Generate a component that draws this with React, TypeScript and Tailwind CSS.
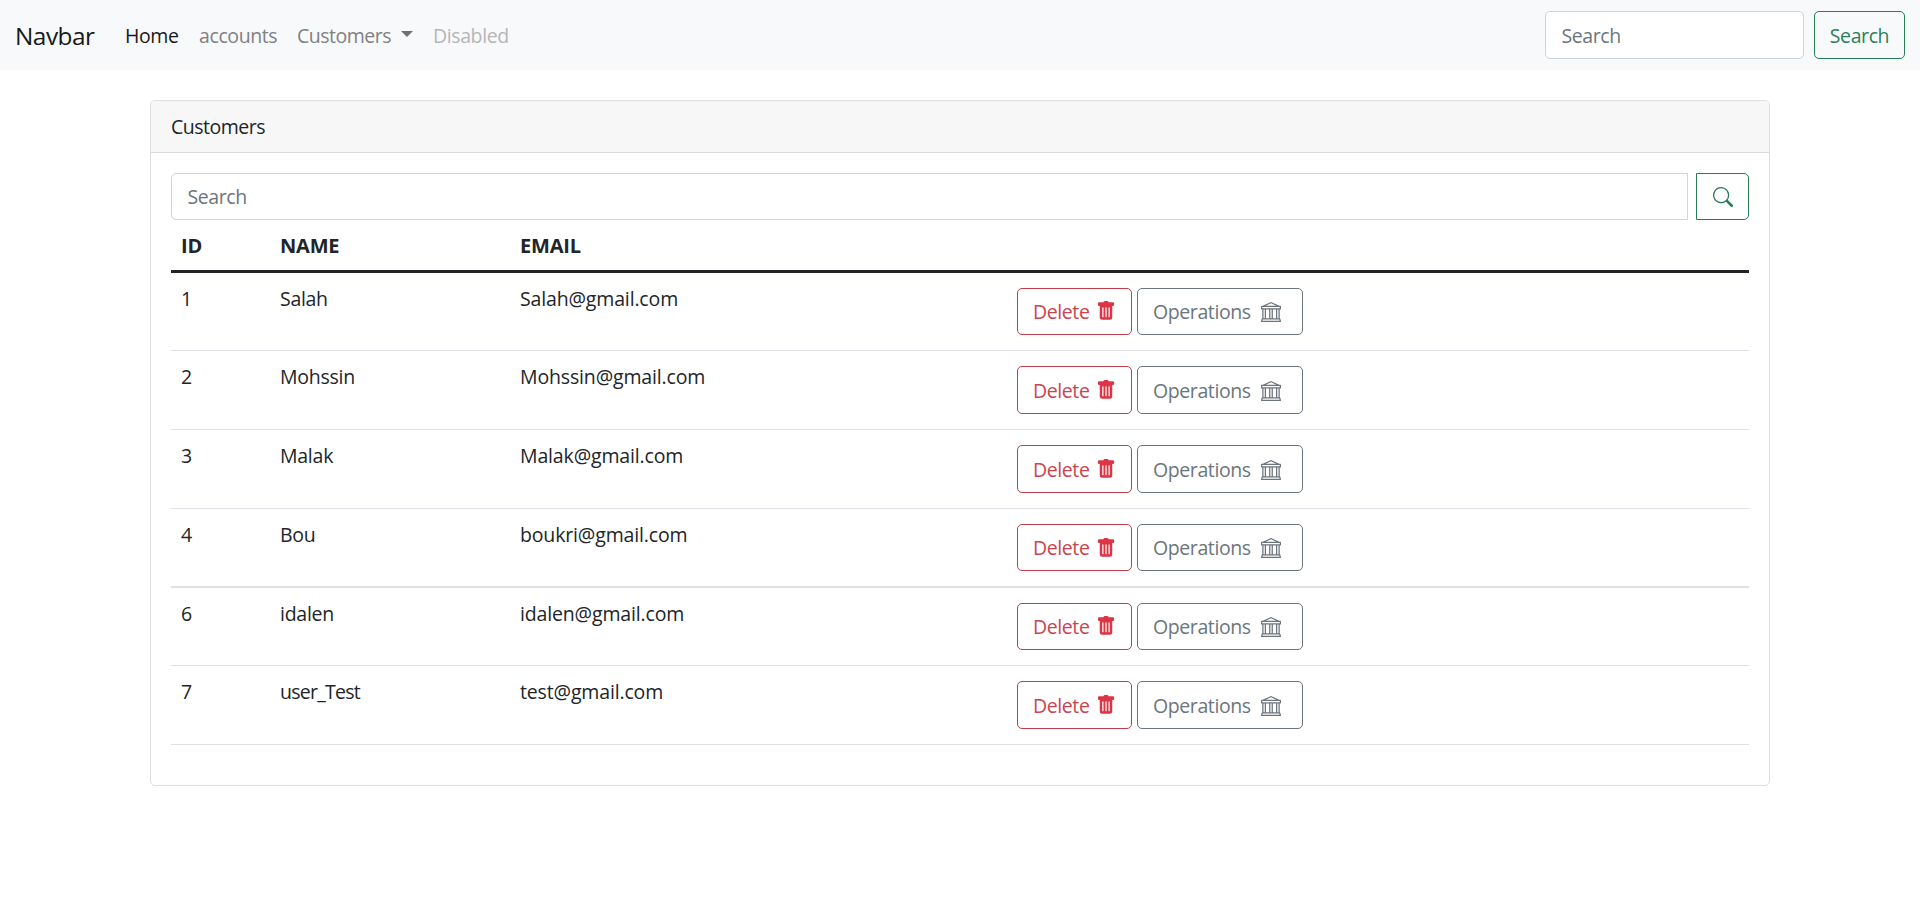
import { BsBank, BsSearch, BsTrashFill } from "react-icons/bs";

type Customer = { id: number; name: string; email: string; row: string; nameCls: string; button: string };

const customers: Customer[] = [
  { id: 1, name: "Salah", email: "Salah@gmail.com", row: "h-[78px] border-b", nameCls: "tracking-[-0.3px]", button: "h-[47px]" },
  { id: 2, name: "Mohssin", email: "Mohssin@gmail.com", row: "h-[79px] border-b", nameCls: "tracking-[-0.25px]", button: "h-[48px] pt-[1px]" },
  { id: 3, name: "Malak", email: "Malak@gmail.com", row: "h-[79px] border-b", nameCls: "tracking-[-0.25px]", button: "h-[48px] pt-[1px]" },
  { id: 4, name: "Bou", email: "boukri@gmail.com", row: "h-[79px] border-b-2", nameCls: "tracking-[-0.25px]", button: "h-[47px] pt-[1px]" },
  { id: 6, name: "idalen", email: "idalen@gmail.com", row: "h-[78px] border-b", nameCls: "tracking-[-0.25px]", button: "h-[47px]" },
  { id: 7, name: "user_Test", email: "test@gmail.com", row: "h-[79px] border-b", nameCls: "tracking-[-0.75px]", button: "h-[48px] pt-[1px]" },
];

function Navbar() {
  return (
    <nav className="flex h-[70px] items-center bg-[#f8f9fa] px-[15px] text-[#808182]">
      <a className="w-[110px] pt-[2px] text-[24.4px] leading-[30px] tracking-[-0.5px] text-[#19191a]">Navbar</a>
      <a className="w-[74px] pt-[2px] text-[#19191a]">Home</a>
      <a className="w-[98px] pt-[2px]">accounts</a>
      <a className="flex w-[136px] items-center pt-[2px]">
        <span className="w-[104px] tracking-[-0.5px]">Customers</span>
        <span className="mt-[-4px] border-x-[6px] border-t-[6px] border-x-transparent border-t-[#6f7071]" />
      </a>
      <a className="pt-[2px] text-[#b5b6b7]">Disabled</a>
      <form className="ml-auto flex gap-[10px]">
        <input
          placeholder="Search"
          className="h-[48px] w-[259px] rounded-[5px] border border-[#ced4da] bg-white px-[15.5px] placeholder:text-[#6c757d]"
        />
        <button type="button" className="h-[48px] w-[91px] rounded-[5px] border border-[#267d56] pt-[2px] text-[#2c7f5a]">
          Search
        </button>
      </form>
    </nav>
  );
}

function CustomerRow({ customer }: { customer: Customer }) {
  return (
    <div className={`flex border-[#dee2e6] ${customer.row}`}>
      <div className="w-[99px] pl-[10px] pt-[11px]">{customer.id}</div>
      <div className={`w-[240px] pl-[10px] pt-[11px] ${customer.nameCls}`}>{customer.name}</div>
      <div className="w-[497px] pl-[10px] pt-[11px] tracking-[-0.15px]">{customer.email}</div>
      <div className="flex items-start gap-[5px] pl-[10px] pt-[15px]">
        <button
          className={`flex w-[115px] items-center rounded-[5px] border border-[#bd3d4b] pl-[15px] text-[#cb434f] ${customer.button}`}
        >
          <span className="w-[63px] text-left">Delete</span>
          <BsTrashFill className="mb-[1px] size-[20px] text-[#dc3545]" />
        </button>
        <button
          className={`flex w-[166px] items-center rounded-[5px] border border-[#6c757d] pl-[15px] text-[#6c757d] ${customer.button}`}
        >
          <span className="w-[108px] text-left">Operations</span>
          <BsBank className="size-[20px]" />
        </button>
      </div>
    </div>
  );
}

export default function App() {
  return (
    <div className="min-h-[902px] bg-white font-['Open_Sans','Noto_Sans',sans-serif] text-[19.5px] leading-[30px] tracking-[-0.4px] text-[#212529]">
      <Navbar />
      <main className="mx-auto mt-[30px] h-[686px] w-[1620px] rounded-[5px] border border-[#dfdfdf] bg-white">
        <header className="h-[52px] rounded-t-[4px] border-b border-[#dadada] bg-[#f7f7f7] pl-[20px] pt-[11px] tracking-[-0.5px]">
          Customers
        </header>
        <div className="px-[20px] pt-[20px]">
          <div className="flex gap-[8px]">
            <input
              placeholder="Search"
              className="h-[47px] flex-1 rounded-l-[5px] border border-[#ced4da] px-[15.5px] placeholder:text-[#6c757d]"
            />
            <button className="flex h-[47px] w-[53px] items-center justify-center rounded-r-[5px] border border-[#267d56] text-[#267d56]">
              <BsSearch className="size-[20px]" />
            </button>
          </div>
          <div>
            <div className="flex h-[53px] border-b-[3px] border-[#212529] pt-[11px] text-[20px] font-bold tracking-[-0.2px]">
              <div className="w-[99px] pl-[10px]">ID</div>
              <div className="w-[240px] pl-[10px]">NAME</div>
              <div className="pl-[10px]">EMAIL</div>
            </div>
            {customers.map((c) => (
              <CustomerRow key={c.id} customer={c} />
            ))}
          </div>
        </div>
      </main>
    </div>
  );
}
